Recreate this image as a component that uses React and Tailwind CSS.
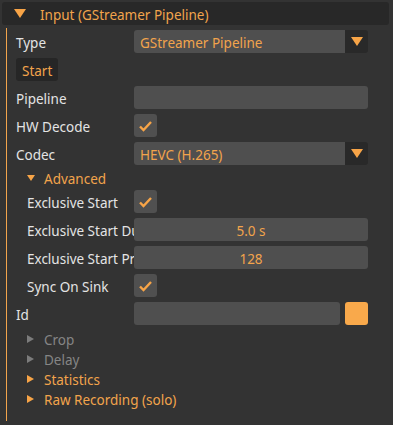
import React from 'react';

const ORANGE = 'text-[#f2a44c]';

function DownTri({ size = 12, color = '#f7a447' }) {
  return (
    <svg width={size} height={Math.round(size * 0.75)} viewBox="0 0 12 9">
      <polygon points="0,0 12,0 6,9" fill={color} />
    </svg>
  );
}

function RightTri({ color }) {
  return (
    <svg width="7" height="8" viewBox="0 0 7 8">
      <polygon points="0,0 7,4 0,8" fill={color} />
    </svg>
  );
}

function Check() {
  return (
    <div className="w-[23px] h-[23px] rounded-[3px] bg-[#505050] flex items-center justify-center">
      <svg width="15" height="12" viewBox="0 0 15 12">
        <polyline points="2,6.5 5.5,10 13,2" fill="none" stroke="#f7a447" strokeWidth="2.4" />
      </svg>
    </div>
  );
}

function Combo({ value }) {
  return (
    <div className="w-[234px] h-[23px] flex rounded-[3px] overflow-hidden">
      <div className={`flex-1 bg-[#4f4f4f] pl-[6px] pt-[3px] flex items-center leading-[18px] ${ORANGE}`}>{value}</div>
      <div className="w-[23px] bg-[#292929] flex items-center justify-center">
        <DownTri size={12} />
      </div>
    </div>
  );
}

function Input({ value, w = 'w-[234px]' }) {
  return (
    <div className={`${w} h-[23px] pt-[3px] rounded-[3px] bg-[#4f4f4f] flex items-center justify-center leading-[18px] ${ORANGE}`}>
      {value}
    </div>
  );
}

function Row({ label, indent, children }) {
  return (
    <div className="flex items-center h-[23px]">
      <div
        className={`${indent ? 'pl-[20px]' : 'pl-[9px]'} pt-[3px] w-[127px] overflow-hidden whitespace-nowrap leading-[18px] text-[#e4e4e4]`}
      >
        {label}
      </div>
      {children}
    </div>
  );
}

function TreeNode({ label, active, open }) {
  return (
    <div className="flex items-center h-[16px] pl-[20px]">
      <div className="w-[17px] flex items-center">
        {open ? (
          <DownTri size={8} />
        ) : (
          <RightTri color={active ? '#f7a447' : '#7c7c7c'} />
        )}
      </div>
      <span className={`pt-[1px] leading-[16px] ${active ? ORANGE : 'text-[#858585]'}`}>{label}</span>
    </div>
  );
}

export default function App() {
  return (
    <div
      className="w-[393px] h-[425px] bg-[#333333] text-[13.5px] leading-none pt-[2px] overflow-hidden"
      style={{ fontFamily: '"Noto Sans", "Open Sans", sans-serif' }}
    >
      <div className="mx-[2px] h-[23px] w-[387px] rounded-[3px] bg-[#282828] flex items-center pl-[12px]">
        <DownTri size={12} />
        <span className={`ml-[14px] pt-[2px] leading-[18px] ${ORANGE}`}>Input (GStreamer Pipeline)</span>
      </div>

      <div className="ml-[6px] mt-[3px] w-[383px] border-l border-[#f2a44c] pt-[2px] pb-[14px] flex flex-col gap-[5px]">
        <Row label="Type">
          <Combo value="GStreamer Pipeline" />
        </Row>
        <div className="flex pl-[9px]">
          <div className={`h-[23px] px-[6px] pt-[3px] rounded-[3px] bg-[#262626] flex items-center leading-[18px] ${ORANGE}`}>Start</div>
        </div>
        <Row label="Pipeline">
          <Input />
        </Row>
        <Row label="HW Decode">
          <Check />
        </Row>
        <Row label="Codec">
          <Combo value="HEVC (H.265)" />
        </Row>
        <div className="-mb-[1px]">
          <TreeNode label="Advanced" active open />
        </div>
        <Row label="Exclusive Start" indent>
          <Check />
        </Row>
        <Row label="Exclusive Start Duration" indent>
          <Input value="5.0 s" />
        </Row>
        <Row label="Exclusive Start Priority" indent>
          <Input value="128" />
        </Row>
        <Row label="Sync On Sink" indent>
          <Check />
        </Row>
        <Row label="Id">
          <div className="flex gap-[5px]">
            <Input w="w-[206px]" />
            <div className="w-[23px] h-[23px] rounded-[3px] bg-[#f9a94b]" />
          </div>
        </Row>
        <div className="flex flex-col gap-[4px] mt-[1px]">
          <TreeNode label="Crop" />
          <TreeNode label="Delay" />
          <TreeNode label="Statistics" active />
          <TreeNode label="Raw Recording (solo)" active />
        </div>
      </div>
    </div>
  );
}
